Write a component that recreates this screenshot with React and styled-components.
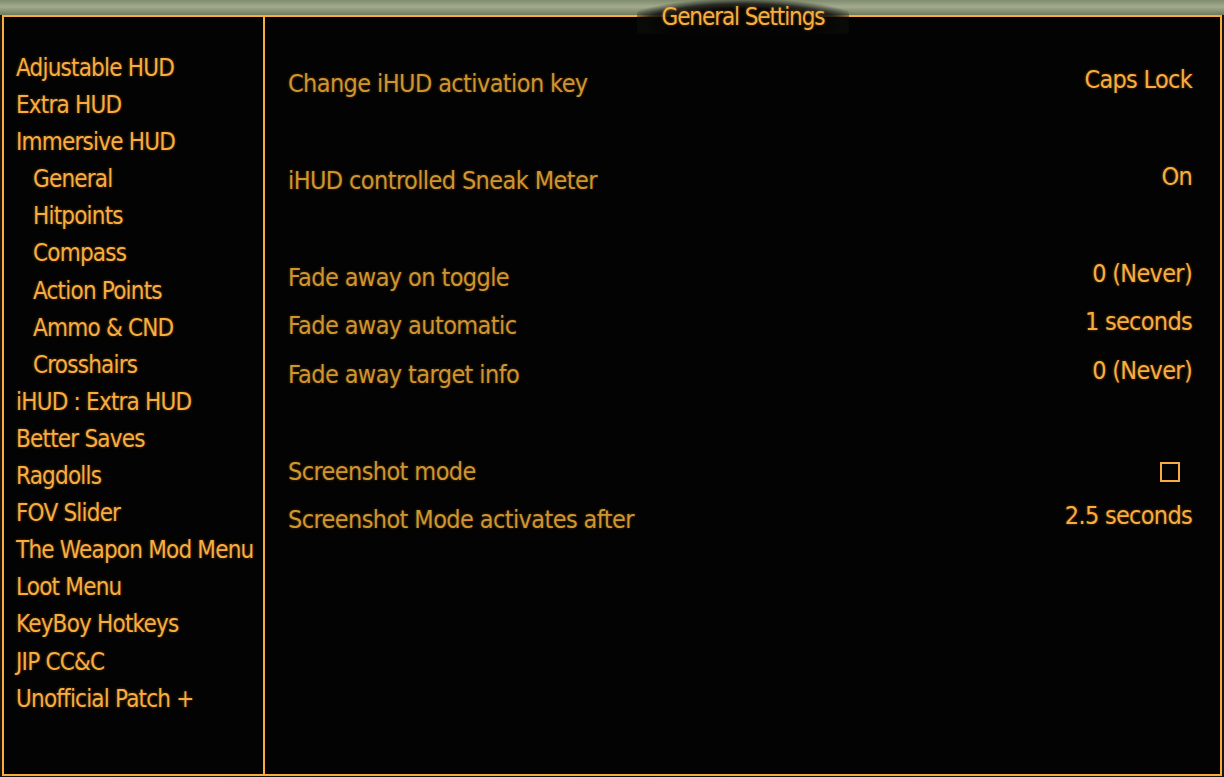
import React from "react";
import styled, { createGlobalStyle } from "styled-components";

const Global = createGlobalStyle`
  html, body { margin: 0; padding: 0; background: #15120c; }
  body { width: 1224px; height: 777px; overflow: hidden; }
`;

const FONT = `"DejaVu Sans Condensed", "Liberation Sans", sans-serif`;
const ORANGE = "#f7ae3f";

const Page = styled.div`
  width: 1224px;
  height: 777px;
  display: flex;
  flex-direction: column;
  background: linear-gradient(90deg, #1a140b 0%, #0c0a07 50%, #1a140b 100%);
  font-family: ${FONT};
`;

const TopBand = styled.div`
  height: 15px;
  flex: none;
  background: linear-gradient(
    180deg,
    #7f8c6e 0%,
    #a3ab8f 45%,
    #6f7a5c 100%
  );
`;

const Frame = styled.div`
  position: relative;
  flex: 1;
  margin: 0 2px 1px 2px;
  border: 2px solid ${ORANGE};
  background: #030303;
  display: grid;
  grid-template-columns: 261px 1fr;
  min-height: 0;
`;

const TitleTab = styled.div`
  position: absolute;
  top: -17px;
  left: 633px;
  width: 212px;
  height: 34px;
  border-radius: 16px 16px 0 0;
  background: radial-gradient(
    ellipse 60% 80% at 50% 75%,
    #040404 60%,
    rgba(12, 12, 10, 0.8) 80%,
    rgba(30, 30, 25, 0) 100%
  );
  display: flex;
  justify-content: center;
  padding-top: 2px;
  box-sizing: border-box;
  color: ${ORANGE};
  font-size: 24px;
  letter-spacing: -1.1px;
  line-height: 30px;
  text-shadow: 0 0 3px rgba(255, 150, 30, 0.45);
`;

const Sidebar = styled.nav`
  border-right: 2px solid ${ORANGE};
  padding: 33px 0 0 12px;
  display: flex;
  flex-direction: column;
`;

const NavItem = styled.div`
  height: 37.1px;
  line-height: 37px;
  padding-left: ${(p) => (p.$sub ? 17 : 0)}px;
  color: ${ORANGE};
  font-size: 24px;
  letter-spacing: -0.8px;
  white-space: nowrap;
  text-shadow: 0 0 3px rgba(255, 150, 30, 0.45);
`;

const Content = styled.section`
  padding: 42px 28px 0 23px;
  display: flex;
  flex-direction: column;
`;

const Row = styled.div`
  height: 48.5px;
  display: flex;
  align-items: center;
  justify-content: space-between;
`;

const Label = styled.span`
  color: #cf952f;
  font-size: 25px;
  letter-spacing: -0.6px;
  white-space: nowrap;
  text-shadow: 0 0 3px rgba(220, 140, 30, 0.4);
`;

const Value = styled.span`
  color: ${ORANGE};
  font-size: 25px;
  letter-spacing: -0.7px;
  white-space: nowrap;
  transform: translateY(-4px);
  text-shadow: 0 0 3px rgba(255, 150, 30, 0.45);
`;

const Check = styled.span`
  width: 16px;
  height: 16px;
  border: 2px solid ${ORANGE};
  margin-right: 12px;
  transform: translateY(1px);
`;

const navItems = [
  ["Adjustable HUD"],
  ["Extra HUD"],
  ["Immersive HUD"],
  ["General", true],
  ["Hitpoints", true],
  ["Compass", true],
  ["Action Points", true],
  ["Ammo & CND", true],
  ["Crosshairs", true],
  ["iHUD : Extra HUD"],
  ["Better Saves"],
  ["Ragdolls"],
  ["FOV Slider"],
  ["The Weapon Mod Menu"],
  ["Loot Menu"],
  ["KeyBoy Hotkeys"],
  ["JIP CC&C"],
  ["Unofficial Patch +"],
];

const rows = [
  { label: "Change iHUD activation key", value: "Caps Lock" },
  null,
  { label: "iHUD controlled Sneak Meter", value: "On" },
  null,
  { label: "Fade away on toggle", value: "0 (Never)" },
  { label: "Fade away automatic", value: "1 seconds" },
  { label: "Fade away target info", value: "0 (Never)" },
  null,
  { label: "Screenshot mode", check: true },
  { label: "Screenshot Mode activates after", value: "2.5 seconds" },
];

export default function App() {
  return (
    <Page>
      <Global />
      <TopBand />
      <Frame>
        <TitleTab>General Settings</TitleTab>
        <Sidebar>
          {navItems.map(([t, sub]) => (
            <NavItem key={t} $sub={sub}>
              {t}
            </NavItem>
          ))}
        </Sidebar>
        <Content>
          {rows.map((r, i) =>
            r ? (
              <Row key={i}>
                <Label>{r.label}</Label>
                {r.check ? <Check /> : <Value>{r.value}</Value>}
              </Row>
            ) : (
              <Row key={i} />
            )
          )}
        </Content>
      </Frame>
    </Page>
  );
}
